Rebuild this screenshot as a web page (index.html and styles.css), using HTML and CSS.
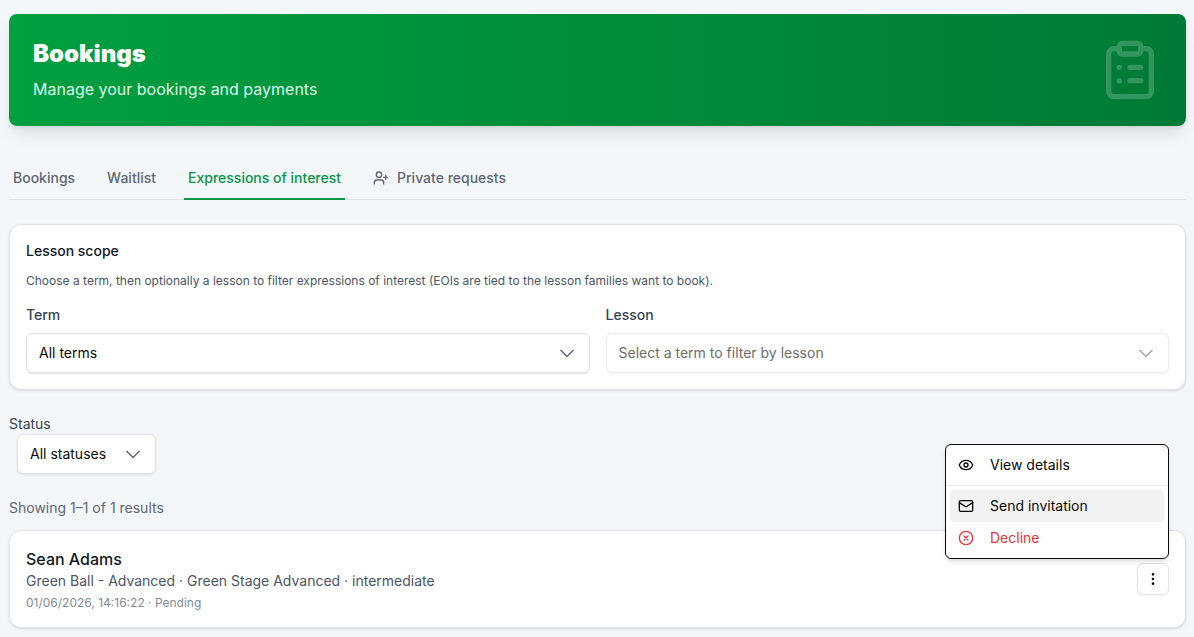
FILE: index.html
```html
<!DOCTYPE html>
<html lang="en">
<head>
<meta charset="utf-8">
<meta name="viewport" content="width=device-width, initial-scale=1">
<title>Bookings</title>
<link rel="stylesheet" href="styles.css">
</head>
<body>
<main class="page">
  <header class="hero">
    <div class="hero-text">
      <h1 class="hero-title">Bookings</h1>
      <p class="hero-subtitle">Manage your bookings and payments</p>
    </div>
    <svg class="hero-icon" viewBox="0 0 24 24" aria-hidden="true"><rect x="8" y="2" width="8" height="4" rx="1"/><path d="M16 4h2a2 2 0 0 1 2 2v14a2 2 0 0 1-2 2H6a2 2 0 0 1-2-2V6a2 2 0 0 1 2-2h2M12 11h4M12 16h4M8 11h.01M8 16h.01"/></svg>
  </header>

  <nav class="tabs" aria-label="Booking sections">
    <a class="tab" href="#bookings">Bookings</a>
    <a class="tab" href="#waitlist">Waitlist</a>
    <a class="tab tab-active" href="#interest" aria-current="page">Expressions of interest</a>
    <a class="tab" href="#private"><svg class="icon" viewBox="0 0 24 24" aria-hidden="true"><path d="M16 21v-2a4 4 0 0 0-4-4H6a4 4 0 0 0-4 4v2"/><circle cx="9" cy="7" r="4"/><path d="M19 8v6M22 11h-6"/></svg>Private requests</a>
  </nav>

  <section class="card scope">
    <h2 class="scope-title">Lesson scope</h2>
    <p class="scope-help">Choose a term, then optionally a lesson to filter expressions of interest (EOIs are tied to the lesson families want to book).</p>
    <div class="fields">
      <div class="field">
        <label class="label" for="term">Term</label>
        <div class="select-wrap">
          <select class="select" id="term"><option>All terms</option></select>
          <svg class="chevron" viewBox="0 0 20 20" aria-hidden="true"><path d="M3.5 7l6.5 6.5L16.5 7"/></svg>
        </div>
      </div>
      <div class="field">
        <label class="label" for="lesson">Lesson</label>
        <div class="select-wrap select-disabled">
          <select class="select" id="lesson" disabled><option>Select a term to filter by lesson</option></select>
          <svg class="chevron" viewBox="0 0 20 20" aria-hidden="true"><path d="M3.5 7l6.5 6.5L16.5 7"/></svg>
        </div>
      </div>
    </div>
  </section>

  <div class="status">
    <label class="label" for="status">Status</label>
    <div class="select-wrap status-select">
      <select class="select" id="status"><option>All statuses</option></select>
      <svg class="chevron" viewBox="0 0 20 20" aria-hidden="true"><path d="M3.5 7l6.5 6.5L16.5 7"/></svg>
    </div>
  </div>

  <p class="results">Showing 1–1 of 1 results</p>

  <article class="card entry">
    <div class="entry-text">
      <h3 class="entry-name">Sean Adams</h3>
      <p class="entry-lesson">Green Ball - Advanced · Green Stage Advanced · intermediate</p>
      <p class="entry-meta">01/06/2026, 14:16:22 · Pending</p>
    </div>
    <div class="actions">
      <button class="more" type="button" aria-label="Actions" aria-expanded="true"><svg class="icon" viewBox="0 0 24 24" aria-hidden="true"><circle cx="12" cy="5" r="1"/><circle cx="12" cy="12" r="1"/><circle cx="12" cy="19" r="1"/></svg></button>
      <div class="menu" role="menu">
        <button class="menu-item" type="button" role="menuitem"><svg class="icon" viewBox="0 0 24 24" aria-hidden="true"><path d="M2.062 12.348a1 1 0 0 1 0-.696 10.75 10.75 0 0 1 19.876 0 1 1 0 0 1 0 .696 10.75 10.75 0 0 1-19.876 0"/><circle cx="12" cy="12" r="3"/></svg>View details</button>
        <div class="menu-line" role="separator"></div>
        <button class="menu-item menu-item-hover" type="button" role="menuitem"><svg class="icon" viewBox="0 0 24 24" aria-hidden="true"><rect x="2" y="4" width="20" height="16" rx="2"/><path d="m22 7-8.97 5.7a1.94 1.94 0 0 1-2.06 0L2 7"/></svg>Send invitation</button>
        <button class="menu-item menu-item-danger" type="button" role="menuitem"><svg class="icon" viewBox="0 0 24 24" aria-hidden="true"><circle cx="12" cy="12" r="10"/><path d="m15 9-6 6M9 9l6 6"/></svg>Decline</button>
      </div>
    </div>
  </article>
</main>
</body>
</html>
```
FILE: styles.css
```css
* { box-sizing: border-box; }

body {
  margin: 0;
  background: #f4f7fa;
  color: #101828;
  font-family: Inter, "Liberation Sans", sans-serif;
  font-size: 14px;
  line-height: 20px;
}

h1, h2, h3, p { margin: 0; }

button, select { font: inherit; }

.page { padding: 14px 8px 8px 9px; }

.icon {
  flex: none;
  width: 16px;
  height: 16px;
  fill: none;
  stroke: currentColor;
  stroke-width: 2;
  stroke-linecap: round;
  stroke-linejoin: round;
}

.hero {
  display: flex;
  align-items: flex-start;
  justify-content: space-between;
  padding: 24px;
  border-radius: 8px;
  background: linear-gradient(to right, #009f40, #007a36);
  box-shadow: 0 10px 15px -3px rgb(0 0 0 / 10%), 0 4px 6px -4px rgb(0 0 0 / 10%);
}

.hero-text {
  display: flex;
  flex-direction: column;
  gap: 8px;
}

.hero-title {
  color: #fff;
  font-size: 24px;
  font-weight: 900;
  line-height: 32px;
}

.hero-subtitle {
  color: #dcfce7;
  font-size: 16px;
  line-height: 22px;
}

.hero-icon {
  width: 64px;
  height: 64px;
  fill: none;
  stroke: #fff;
  stroke-width: 2;
  stroke-linecap: round;
  stroke-linejoin: round;
  opacity: 0.2;
}

.tabs {
  display: flex;
  gap: 24px;
  margin-top: 32px;
  box-shadow: inset 0 -1px #dfe3e8;
}

.tab {
  display: flex;
  align-items: center;
  gap: 8px;
  padding: 10px 4px;
  border-bottom: 2px solid transparent;
  color: #5d6675;
  font-weight: 500;
  text-decoration: none;
}

.tab-active {
  border-color: #0a9547;
  color: #0a9547;
}

.card {
  padding: 16px;
  border: 1px solid #e1e4e7;
  border-radius: 12px;
  background: #fff;
  box-shadow: 0 1px 3px rgb(0 0 0 / 10%), 0 1px 2px -1px rgb(0 0 0 / 10%);
}

.scope { margin-top: 24px; }

.scope-title {
  font-size: 14px;
  font-weight: 500;
}

.scope-help {
  margin-top: 12px;
  color: #4a5565;
  font-size: 12px;
  line-height: 16px;
}

.fields {
  display: grid;
  grid-template-columns: 1fr 1fr;
  gap: 16px;
  margin-top: 16px;
}

.label {
  display: block;
  color: #364153;
  font-weight: 500;
}

.field .label { margin-bottom: 8px; }

.select-wrap {
  display: grid;
  align-items: center;
}

.select {
  grid-area: 1 / 1;
  width: 100%;
  height: 40px;
  padding: 0 40px 0 12px;
  border: 1px solid #e0e2e4;
  border-radius: 6px;
  background: #fff;
  color: #0a0a0a;
  appearance: none;
  box-shadow: 0 1px 2px rgb(0 0 0 / 10%);
  opacity: 1;
}

.chevron {
  grid-area: 1 / 1;
  justify-self: end;
  width: 20px;
  height: 20px;
  margin-right: 13px;
  fill: none;
  stroke: #5d6675;
  stroke-width: 1.5;
  pointer-events: none;
}

.select-disabled .select {
  border-color: #ebecee;
  color: #6c6c6c;
  box-shadow: 0 1px 2px rgb(0 0 0 / 5%);
}

.select-disabled .chevron { stroke: #a0a5ac; }

.status { margin-top: 24px; }

.status .label { font-weight: 400; }

.status-select {
  width: 139px;
  margin-left: 8px;
}

.results {
  margin: 24px 0 12px;
  color: #5d6675;
}

.entry {
  display: flex;
  align-items: center;
  justify-content: space-between;
}

.entry-name {
  font-size: 16px;
  font-weight: 500;
  line-height: 24px;
}

.entry-lesson { color: #4a5565; }

.entry-meta {
  margin-top: 4px;
  color: #838a96;
  font-size: 12px;
  line-height: 16px;
}

.actions { position: relative; }

.more {
  display: flex;
  align-items: center;
  justify-content: center;
  width: 32px;
  height: 32px;
  padding: 0;
  border: 1px solid #e2e4e6;
  border-radius: 6px;
  background: #fff;
  color: #0a0a0a;
  box-shadow: 0 1px 2px rgb(0 0 0 / 6%);
}

.menu {
  position: absolute;
  right: 0;
  bottom: calc(100% + 4px);
  width: 224px;
  padding: 4px;
  border: 1px solid #0a0a0a;
  border-radius: 6px;
  background: #fff;
  box-shadow: 0 4px 6px -1px rgb(0 0 0 / 10%), 0 2px 4px -2px rgb(0 0 0 / 10%);
}

.menu-item {
  display: flex;
  align-items: center;
  gap: 16px;
  width: 100%;
  padding: 6px 8px;
  border: 0;
  border-radius: 4px;
  background: transparent;
  color: #0a0a0a;
  text-align: left;
}

.menu-item-hover { background: #f2f2f2; }

.menu-item-danger { color: #e7343c; }

.menu-line {
  height: 1px;
  margin: 4px -4px;
  background: #ebebeb;
}
```
